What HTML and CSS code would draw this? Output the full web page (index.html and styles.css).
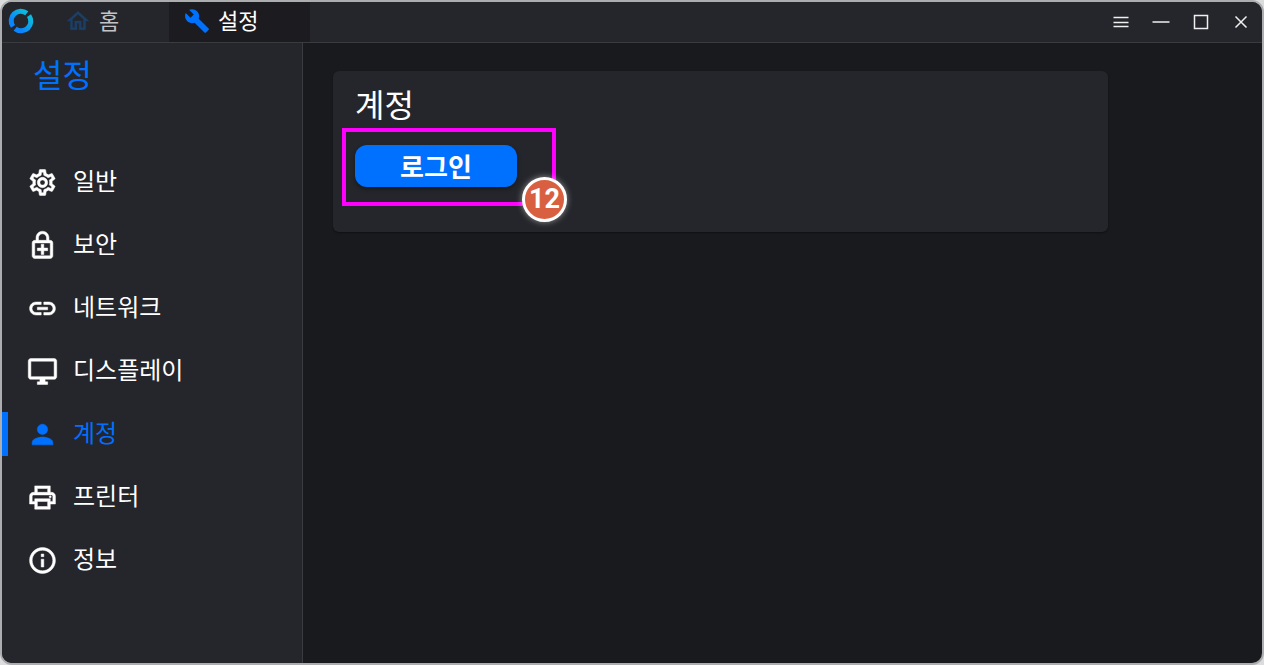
FILE: index.html
```html
<!DOCTYPE html>
<html lang="ko">
  <head>
    <meta charset="utf-8" />
    <meta name="viewport" content="width=device-width, initial-scale=1" />
    <title>설정</title>
    <link rel="stylesheet" href="styles.css">
  </head>
  <body>
    <div class="window">
      <header class="titlebar">
        <svg class="logo" viewBox="0 0 26 26">
          <defs>
            <linearGradient id="logo-fill" x1="0" y1="1" x2="1" y2="0">
              <stop offset="0.2" stop-color="#0a84ff" />
              <stop offset="0.9" stop-color="#0cb8dc" />
            </linearGradient>
          </defs>
          <g fill="none" stroke="url(#logo-fill)" stroke-width="5">
            <path d="M5 18.400A9.600 9.600 0 0 1 18.800 5.300" />
            <path d="M21 7.600A9.600 9.600 0 0 1 7.200 20.700" />
          </g>
        </svg>
        <nav class="tabs">
          <a class="tab" href="#home">
            <svg class="tab-icon home" viewBox="0 0 24 24"><path d="M12 5.69l5 4.5V18h-2v-6H9v6H7v-7.81l5-4.5M12 3L2 12h3v8h6v-6h2v6h6v-8h3L12 3z" /></svg>
            <span>홈</span>
          </a>
          <a class="tab active" href="#settings">
            <svg class="tab-icon wrench" viewBox="0 0 24 24"><path d="M22.7 19l-9.1-9.1c.9-2.3.4-5-1.5-6.9-2-2-5-2.4-7.4-1.3L9 6 6 9 1.6 4.7C.4 7.1.9 10.1 2.9 12.1c1.9 1.9 4.6 2.4 6.9 1.5l9.1 9.1c.4.4 1 .4 1.4 0l2.3-2.3c.5-.4.5-1.1.1-1.4z" /></svg>
            <span>설정</span>
          </a>
        </nav>
        <div class="controls">
          <button type="button" aria-label="메뉴">
            <svg viewBox="0 0 20 20"><path d="M2.500 5.500h15M2.500 10.500h15M2.500 14.500h15" /></svg>
          </button>
          <button type="button" aria-label="최소화">
            <svg viewBox="0 0 20 20"><path d="M1.500 10h17" /></svg>
          </button>
          <button type="button" aria-label="최대화">
            <svg viewBox="0 0 20 20"><path d="M3.500 3.500h13v13h-13z" /></svg>
          </button>
          <button type="button" aria-label="닫기">
            <svg viewBox="0 0 20 20"><path d="M4.500 4.500l11 11M15.500 4.500l-11 11" /></svg>
          </button>
        </div>
      </header>
      <div class="body">
        <aside class="sidebar">
          <h1>설정</h1>
          <nav class="menu">
            <a class="menu-item" href="#general">
              <svg viewBox="0 0 24 24"><path d="M19.43 12.98c.04-.32.07-.64.07-.98 0-.34-.03-.66-.07-.98l2.11-1.65c.19-.15.24-.42.12-.64l-2-3.46c-.09-.16-.26-.25-.44-.25-.06 0-.12.01-.17.03l-2.49 1c-.52-.4-1.08-.73-1.69-.98l-.38-2.65C14.46 2.18 14.25 2 14 2h-4c-.25 0-.46.18-.49.42l-.38 2.65c-.61.25-1.17.59-1.69.98l-2.49-1c-.06-.02-.12-.03-.18-.03-.17 0-.34.09-.43.25l-2 3.46c-.13.22-.07.49.12.64l2.11 1.65c-.04.32-.07.65-.07.98 0 .33.03.66.07.98l-2.11 1.65c-.19.15-.24.42-.12.64l2 3.46c.09.16.26.25.44.25.06 0 .12-.01.17-.03l2.49-1c.52.4 1.08.73 1.69.98l.38 2.65c.03.24.24.42.49.42h4c.25 0 .46-.18.49-.42l.38-2.65c.61-.25 1.17-.59 1.69-.98l2.49 1c.06.02.12.03.18.03.17 0 .34-.09.43-.25l2-3.46c.12-.22.07-.49-.12-.64l-2.11-1.65zm-1.98-1.71c.04.31.05.52.05.73 0 .21-.02.43-.05.73l-.14 1.13.89.7 1.08.84-.7 1.21-1.27-.51-1.04-.42-.9.68c-.43.32-.84.56-1.25.73l-1.06.43-.16 1.13-.2 1.35h-1.4l-.19-1.35-.16-1.13-1.06-.43c-.43-.18-.83-.41-1.23-.71l-.91-.7-1.06.43-1.27.51-.7-1.21 1.08-.84.89-.7-.14-1.13c-.03-.31-.05-.54-.05-.74s.02-.43.05-.73l.14-1.13-.89-.7-1.08-.84.7-1.21 1.27.51 1.04.42.9-.68c.43-.32.84-.56 1.25-.73l1.06-.43.16-1.13.2-1.35h1.39l.19 1.35.16 1.13 1.06.43c.43.18.83.41 1.23.71l.91.7 1.06-.43 1.27-.51.7 1.21-1.07.85-.89.7.14 1.13zM12 8c-2.21 0-4 1.79-4 4s1.79 4 4 4 4-1.79 4-4-1.79-4-4-4zm0 6c-1.1 0-2-.9-2-2s.9-2 2-2 2 .9 2 2-.9 2-2 2z" /></svg>
              <span>일반</span>
            </a>
            <a class="menu-item" href="#security">
              <svg viewBox="0 0 24 24"><path d="M18 8h-1V6c0-2.76-2.24-5-5-5S7 3.24 7 6v2H6c-1.1 0-2 .9-2 2v10c0 1.1.9 2 2 2h12c1.1 0 2-.9 2-2V10c0-1.1-.9-2-2-2zM8.9 6c0-1.71 1.39-3.1 3.1-3.1s3.1 1.39 3.1 3.1v2H8.9V6zM18 20H6V10h12v10zm-7-1h2v-3h3v-2h-3v-3h-2v3H8v2h3z" /></svg>
              <span>보안</span>
            </a>
            <a class="menu-item" href="#network">
              <svg viewBox="0 0 24 24"><path d="M3.9 12c0-1.71 1.39-3.1 3.1-3.1h4V7H7c-2.76 0-5 2.24-5 5s2.24 5 5 5h4v-1.9H7c-1.71 0-3.1-1.39-3.1-3.1zM8 13h8v-2H8v2zm9-6h-4v1.9h4c1.71 0 3.1 1.39 3.1 3.1s-1.39 3.1-3.1 3.1h-4V17h4c2.76 0 5-2.24 5-5s-2.24-5-5-5z" /></svg>
              <span>네트워크</span>
            </a>
            <a class="menu-item" href="#display">
              <svg viewBox="0 0 24 24"><path d="M21 2H3c-1.1 0-2 .9-2 2v12c0 1.1.9 2 2 2h7v2H8v2h8v-2h-2v-2h7c1.1 0 2-.9 2-2V4c0-1.1-.9-2-2-2zm0 14H3V4h18v12z" /></svg>
              <span>디스플레이</span>
            </a>
            <a class="menu-item active" href="#account">
              <svg viewBox="0 0 24 24"><path d="M12 12c2.21 0 4-1.79 4-4s-1.79-4-4-4-4 1.79-4 4 1.79 4 4 4zm0 2c-2.67 0-8 1.34-8 4v2h16v-2c0-2.66-5.33-4-8-4z" /></svg>
              <span>계정</span>
            </a>
            <a class="menu-item" href="#printer">
              <svg viewBox="0 0 24 24"><path d="M19 8h-1V3H6v5H5c-1.66 0-3 1.34-3 3v6h4v4h12v-4h4v-6c0-1.66-1.34-3-3-3zM8 5h8v3H8V5zm8 12v2H8v-4h8v2zm2-2v-2H6v2H4v-4c0-.55.45-1 1-1h14c.55 0 1 .45 1 1v4h-2z" /><circle cx="18" cy="11.5" r="0.8" /></svg>
              <span>프린터</span>
            </a>
            <a class="menu-item" href="#about">
              <svg viewBox="0 0 24 24"><path d="M11 7h2v2h-2zm0 4h2v6h-2zm1-9C6.48 2 2 6.48 2 12s4.48 10 10 10 10-4.48 10-10S17.52 2 12 2zm0 18c-4.41 0-8-3.59-8-8s3.59-8 8-8 8 3.59 8 8-3.59 8-8 8z" /></svg>
              <span>정보</span>
            </a>
          </nav>
        </aside>
        <main class="content">
          <section class="card">
            <h2>계정</h2>
            <div class="login">
              <button type="button" class="login-button">로그인</button>
              <div class="highlight"><span class="step">12</span></div>
            </div>
          </section>
        </main>
      </div>
    </div>
  </body>
</html>
```
FILE: styles.css
```css
* {
  box-sizing: border-box;
}

body {
  margin: 0;
  background-color: #dcdcde;
  color: #ffffff;
  font-family: "Noto Sans CJK KR", sans-serif;
}

h1,
h2 {
  margin: 0;
  font-size: 32px;
  font-weight: 400;
  line-height: 40px;
}

a {
  color: inherit;
  text-decoration: none;
}

button {
  padding: 0;
  border: 0;
  font-family: inherit;
  color: inherit;
}

.window {
  display: flex;
  flex-direction: column;
  min-height: 100vh;
  border: 2px solid #acadaf;
  border-radius: 12px;
  background-color: #191a1e;
  overflow: hidden;
}

/* title bar */
.titlebar {
  display: flex;
  height: 41px;
  background-color: #25262b;
  border-bottom: 1px solid #3a3b3f;
}

.logo {
  width: 26px;
  height: 26px;
  margin: 6px 16px 0 6px;
}

.tabs {
  display: flex;
}

.tab {
  display: flex;
  align-items: center;
  gap: 8px;
  width: 119px;
  padding-left: 15px;
  padding-bottom: 2px;
  color: #c4c4c6;
  font-size: 22px;
  line-height: 32px;
}

.tab span {
  padding-bottom: 4px;
}

.tab.active {
  width: 141px;
  background-color: #1c1b20;
  color: #ffffff;
}

.tab-icon {
  width: 26px;
  height: 26px;
}

.home {
  fill: #1c3f66;
  stroke: #1c3f66;
  stroke-width: 0.4;
}

.wrench {
  fill: #0070ff;
}

.controls {
  display: flex;
  align-items: center;
  gap: 20px;
  margin-left: auto;
  padding-right: 11px;
}

.controls button {
  width: 20px;
  height: 20px;
  background: none;
}

.controls svg {
  display: block;
  fill: none;
  stroke: #f0f0f0;
  stroke-width: 1.5;
}

/* sidebar */
.body {
  display: flex;
  flex: 1;
}

.sidebar {
  width: 301px;
  padding-top: 10px;
  background-color: #25262b;
  border-right: 1px solid #3a3b3f;
}

.sidebar h1 {
  padding-left: 31px;
  color: #0070ff;
}

.menu {
  display: flex;
  flex-direction: column;
  gap: 19px;
  margin-top: 67px;
}

.menu-item {
  display: flex;
  align-items: center;
  gap: 15px;
  height: 44px;
  padding-left: 19px;
  border-left: 6px solid transparent;
  font-size: 24px;
  line-height: 32px;
}

.menu-item span {
  padding-bottom: 4px;
}

.menu-item svg {
  width: 31px;
  height: 31px;
  fill: currentColor;
  stroke: currentColor;
  stroke-width: 0.4;
}

.menu-item.active {
  border-color: #0070ff;
  color: #0070ff;
}

/* content */
.content {
  flex: 1;
  padding: 28px 154px 28px 30px;
}

.card {
  padding: 12px 22px 45px;
  background-color: #25262b;
  border-radius: 6px;
  box-shadow: 0 1px 2px rgb(0 0 0 / 40%);
}

.login {
  position: relative;
  width: 162px;
  margin-top: 22px;
}

.login-button {
  display: block;
  width: 100%;
  height: 42px;
  border-radius: 12px;
  background-color: #0070ff;
  box-shadow: 0 2px 4px rgb(0 0 0 / 40%);
  font-size: 26px;
  font-weight: 700;
  line-height: 40px;
}

.highlight {
  position: absolute;
  top: -17px;
  left: -13px;
  width: 214px;
  height: 78px;
  border: 4px solid #ff00ff;
  pointer-events: none;
}

.step {
  position: absolute;
  right: -15px;
  bottom: -20px;
  width: 45px;
  height: 45px;
  border: 3px solid #ffffff;
  border-radius: 50%;
  background-color: #d95f41;
  box-shadow: 0 0 6px rgb(255 255 255 / 50%);
  font-family: Roboto, "Liberation Sans", sans-serif;
  font-size: 27px;
  font-weight: 700;
  line-height: 38px;
  text-align: center;
}
```
